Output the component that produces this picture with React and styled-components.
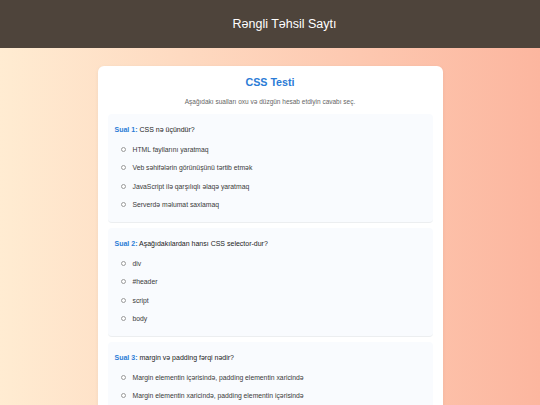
import React from 'react';
import styled, { createGlobalStyle } from 'styled-components';

const GlobalStyle = createGlobalStyle`
  body {
    margin: 0;
    font-family: "Liberation Sans", Arial, sans-serif;
    background: linear-gradient(to right, #ffecd2, #fcb69f);
    min-height: 100vh;
  }
`;

const Header = styled.header`
  height: 48px;
  background: #4e443b;
  color: #fff;
  display: flex;
  align-items: center;
  justify-content: center;
  padding-left: 29px;
`;

const SiteTitle = styled.h1`
  margin: 0;
  font-size: 12.5px;
  font-weight: normal;
`;

const Main = styled.main`
  padding-top: 18px;
  display: flex;
  justify-content: center;
`;

const Card = styled.div`
  width: 345px;
  box-sizing: border-box;
  background: #fff;
  border-radius: 6px;
  padding: 10px 10px;
  box-shadow: 0 1px 4px rgba(0, 0, 0, 0.05);
`;

const Title = styled.h2`
  margin: 0;
  text-align: center;
  font-size: 10.7px;
  line-height: 13px;
  color: #2b7bd6;
`;

const Intro = styled.p`
  margin: 9px 0 8px;
  text-align: center;
  font-size: 6.5px;
  line-height: 8px;
  color: #666;
`;

const Question = styled.div`
  background: #f9fbfe;
  border-radius: 4px;
  border-bottom: 1px solid #eceef0;
  padding: 11px 7px 8px;
  margin-bottom: 5px;
`;

const QuestionText = styled.p`
  margin: 0 0 6px;
  font-size: 7px;
  line-height: 9px;
  color: #222;
`;

const Label = styled.span`
  color: #2b7bd6;
  font-weight: bold;
`;

const Option = styled.label`
  display: flex;
  align-items: center;
  height: 18.5px;
  padding-left: 6px;
  gap: 7px;
  font-size: 6.8px;
  color: #3a3a3a;
`;

const Radio = styled.input.attrs({ type: 'radio' })`
  appearance: none;
  margin: 0;
  width: 5px;
  height: 5px;
  border: 0.8px solid #9a9a9a;
  border-radius: 50%;
  background: #fff;
  box-sizing: border-box;
`;

const questions = [
  {
    text: 'CSS nə üçündür?',
    options: [
      'HTML fayllarını yaratmaq',
      'Veb səhifələrin görünüşünü tərtib etmək',
      'JavaScript ilə qarşılıqlı əlaqə yaratmaq',
      'Serverdə məlumat saxlamaq',
    ],
  },
  {
    text: 'Aşağıdakılardan hansı CSS selector-dur?',
    options: ['div', '#header', 'script', 'body'],
  },
  {
    text: 'margin və padding fərqi nədir?',
    options: [
      'Margin elementin içərisində, padding elementin xaricində',
      'Margin elementin xaricində, padding elementin içərisində',
      'İkisi də eyni şeydir',
      'Heç biri',
    ],
  },
];

const App = () => (
  <>
    <GlobalStyle />
    <Header>
      <SiteTitle>Rəngli Təhsil Saytı</SiteTitle>
    </Header>
    <Main>
      <Card>
        <Title>CSS Testi</Title>
        <Intro>Aşağıdakı sualları oxu və düzgün hesab etdiyin cavabı seç.</Intro>
        {questions.map((q, i) => (
          <Question key={i}>
            <QuestionText>
              <Label>Sual {i + 1}:</Label> {q.text}
            </QuestionText>
            {q.options.map((o, j) => (
              <Option key={j}>
                <Radio name={`q${i}`} />
                {o}
              </Option>
            ))}
          </Question>
        ))}
      </Card>
    </Main>
  </>
);

export default App;
